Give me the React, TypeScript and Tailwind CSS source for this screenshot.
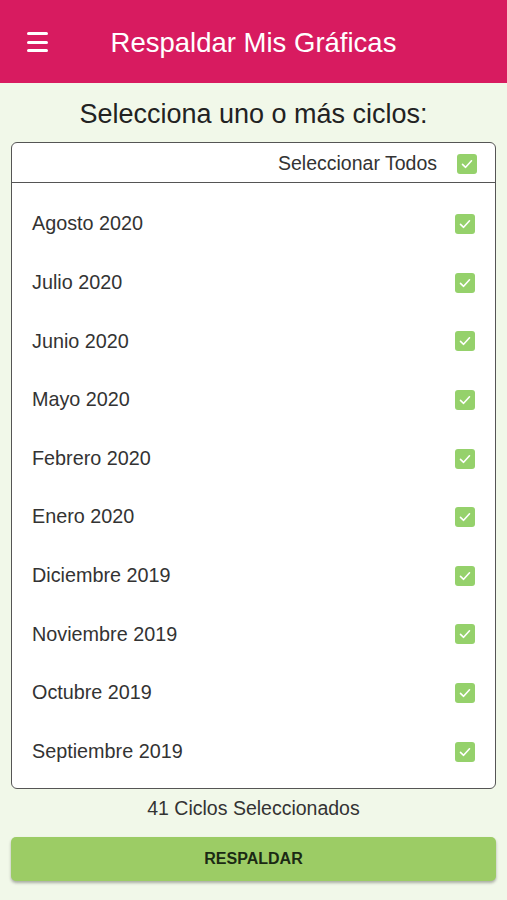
import React from 'react';

const cycles = [
  'Agosto 2020',
  'Julio 2020',
  'Junio 2020',
  'Mayo 2020',
  'Febrero 2020',
  'Enero 2020',
  'Diciembre 2019',
  'Noviembre 2019',
  'Octubre 2019',
  'Septiembre 2019',
];

function CheckBox() {
  return (
    <span className="flex h-[20px] w-[20px] items-center justify-center rounded-[3px] bg-[#95d16b]">
      <svg width="14" height="14" viewBox="0 0 14 14" fill="none">
        <path d="M2.5 7.4 L5.6 10.3 L11.5 3.8" stroke="white" strokeWidth="1.6" strokeLinecap="round" strokeLinejoin="round" />
      </svg>
    </span>
  );
}

export default function App() {
  return (
    <div className="flex min-h-[900px] w-full flex-col bg-[#f1f8e9] font-['Liberation_Sans',Arial,sans-serif] text-[#333]">
      {/* barra superior */}
      <header className="relative flex h-[83px] items-center justify-center bg-[#d81b60] pt-[2px]">
        <button className="absolute left-[27px] top-[32px] flex w-[21px] flex-col gap-[5.5px]">
          <span className="h-[3px] w-full rounded-sm bg-white" />
          <span className="h-[3px] w-full rounded-sm bg-white" />
          <span className="h-[3px] w-full rounded-sm bg-white" />
        </button>
        <h1 className="text-[27.5px] leading-[32px] text-white">Respaldar Mis Gráficas</h1>
      </header>

      <main className="flex flex-col px-[11px] pt-[15px]">
        <h2 className="text-center text-[27px] leading-[32px] text-[#222]">Selecciona uno o más ciclos:</h2>

        <section className="mt-[12px] rounded-[6px] border border-[#555] bg-white">
          <div className="flex h-[40px] items-center justify-end gap-[20px] border-b border-[#555] pr-[18px] pt-[2px]">
            <span className="text-[19.5px] text-[#333]">Seleccionar Todos</span>
            <CheckBox />
          </div>
          <ul className="pb-[7px] pt-[12px]">
            {cycles.map((c) => (
              <li key={c} className="flex h-[58.6px] items-center justify-between pl-[20px] pr-[20px]">
                <span className="text-[19.8px] text-[#333]">{c}</span>
                <CheckBox />
              </li>
            ))}
          </ul>
        </section>

        <p className="mt-[7px] text-center text-[19.5px] leading-[24px] text-[#333]">41 Ciclos Seleccionados</p>

        <button className="mt-[17px] h-[44px] rounded-[5px] bg-[#9ccc65] text-[16px] font-bold text-[#1b2a14] shadow-[0_2px_3px_rgba(0,0,0,0.3)]">
          RESPALDAR
        </button>
      </main>
    </div>
  );
}
